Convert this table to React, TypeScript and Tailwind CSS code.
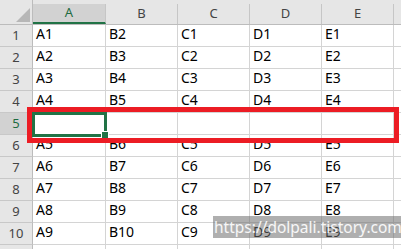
import React from 'react';

const columns = ['A', 'B', 'C', 'D', 'E'];
const colWidths = ['w-[73px]', 'w-[72px]', 'w-[72px]', 'w-[72px]', 'w-[72px]'];

const rows: (string[] | null)[] = [
	['A1', 'B2', 'C1', 'D1', 'E1'],
	['A2', 'B3', 'C2', 'D2', 'E2'],
	['A3', 'B4', 'C3', 'D3', 'E3'],
	['A4', 'B5', 'C4', 'D4', 'E4'],
	null,
	['A5', 'B6', 'C5', 'D5', 'E5'],
	['A6', 'B7', 'C6', 'D6', 'E6'],
	['A7', 'B8', 'C7', 'D7', 'E7'],
	['A8', 'B9', 'C8', 'D8', 'E8'],
	['A9', 'B10', 'C9', 'D9', 'E9'],
];

const HeaderRow = () => (
	<div className="flex h-[25px] border-b border-[#bcbcbc] bg-[#e6e6e6]">
		<div className="relative w-[33px] h-full border-r border-[#bcbcbc]">
			<svg className="absolute left-[15px] top-[8px]" width="16" height="14" viewBox="0 0 16 14">
				<polygon points="15,0 15,14 1,14" fill="#b7b7b7" />
			</svg>
		</div>
		{columns.map((c, i) => (
			<div key={c} className={`${colWidths[i]} pt-[4px] h-full`}>
				<div
					className={`flex h-full items-center justify-center border-r border-[#c6c6c6] text-[13px] ${
						i === 0
							? 'bg-[#d2d2d2] border-b-2 border-b-[#217346] text-[#1e6b41]'
							: 'text-[#444444]'
					}`}
				>
					{c}
				</div>
			</div>
		))}
		<div className="flex-1" />
	</div>
);

const SheetRow = ({ index, cells }: { index: number; cells: string[] | null }) => {
	const selected = cells === null;
	return (
		<div className="flex h-[22px]">
			<div
				className={`flex w-[33px] items-center justify-center border-r border-b border-r-[#bcbcbc] border-b-[#c8c8c8] text-[13px] ${
					selected ? 'bg-[#d2d2d2] text-[#1e6b41]' : 'bg-[#e6e6e6] text-[#444444]'
				}`}
			>
				{index + 1}
			</div>
			{columns.map((c, i) => (
				<div
					key={c}
					className={`${colWidths[i]} flex items-end pb-[3px] pl-[3px] border-r border-b border-[#d4d4d4] text-[14px] leading-[18px] text-black`}
				>
					{cells ? cells[i] : ''}
				</div>
			))}
			<div className="flex-1 border-b border-[#d4d4d4]" />
		</div>
	);
};

export default function App() {
	return (
		<div
			className="relative w-[401px] h-[249px] overflow-hidden bg-white"
			style={{ fontFamily: '"Noto Sans", "Noto Sans CJK KR", sans-serif' }}
		>
			<HeaderRow />
			{rows.map((r, i) => (
				<SheetRow key={i} index={i} cells={r} />
			))}
			<div className="flex h-[22px]">
				<div className="w-[33px] border-r border-[#bcbcbc] bg-[#e6e6e6]" />
				{colWidths.map((w, i) => (
					<div key={i} className={`${w} border-r border-[#d4d4d4]`} />
				))}
			</div>

			{/* selected cell A5 */}
			<div className="absolute left-[32px] top-[112px] w-[75px] h-[25px] border-[3px] border-[#217346]" />
			<div className="absolute left-[102px] top-[132px] w-[6px] h-[6px] bg-[#217346] outline outline-1 outline-white" />

			{/* red highlight */}
			<div className="absolute left-[27px] top-[107px] w-[372px] h-[36px] border-[5px] border-[#ec1c24]" />

			{/* watermark */}
			<div className="absolute left-[213px] top-[216px] h-[22px] px-[1px] bg-[rgba(110,110,110,0.55)] text-[15.5px] leading-[22px] text-white/90 whitespace-nowrap">
				https://dolpali.tistory.com/
			</div>
		</div>
	);
}
